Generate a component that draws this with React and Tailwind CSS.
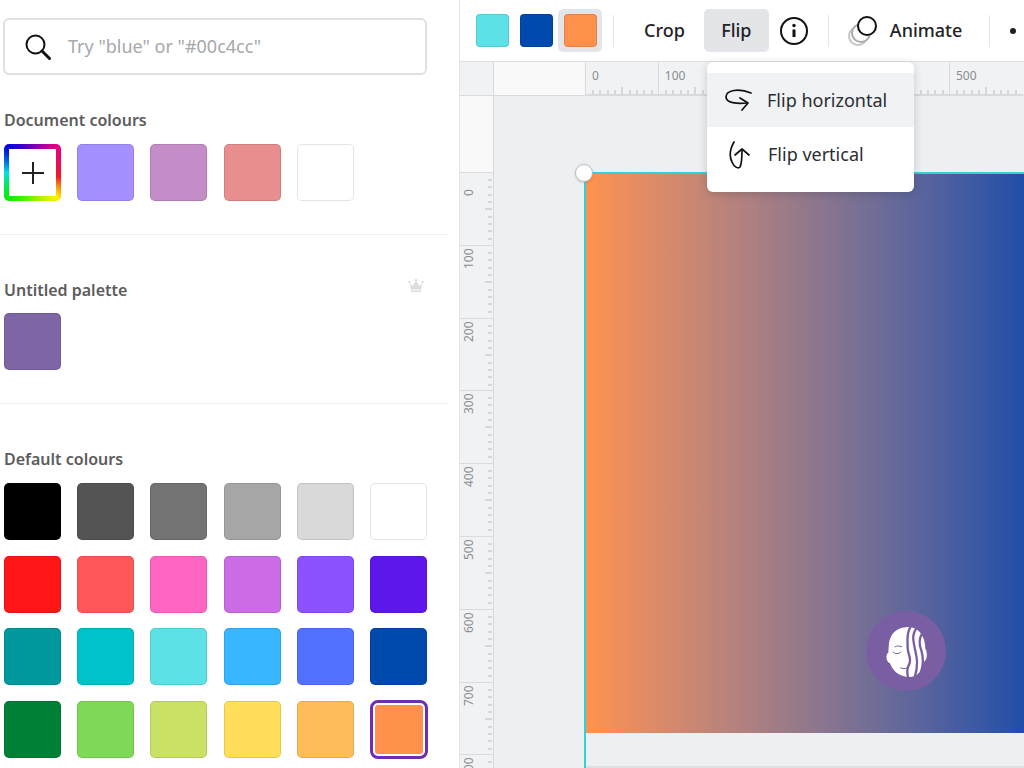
import React from "react";

const documentColours = ["bg-[#a68fff]", "bg-[#c48dc8]", "bg-[#e88e8e]", "bg-white"];

const defaultColours = [
  "bg-[#000000]", "bg-[#545454]", "bg-[#737373]", "bg-[#a6a6a6]", "bg-[#d9d9d9]", "bg-white",
  "bg-[#ff1616]", "bg-[#ff5757]", "bg-[#ff66c4]", "bg-[#cb6ce6]", "bg-[#8c52ff]", "bg-[#5e17eb]",
  "bg-[#03989e]", "bg-[#00c2cb]", "bg-[#5ce1e6]", "bg-[#38b6ff]", "bg-[#5271ff]", "bg-[#004aad]",
  "bg-[#008037]", "bg-[#7ed957]", "bg-[#c9e265]", "bg-[#ffde59]", "bg-[#ffbd59]",
];

const Swatch = ({ color }) => (
  <div className={`w-[57px] h-[57px] rounded-[5px] border border-black/10 ${color}`}></div>
);

const SwatchGrid = ({ children, className = "" }) => (
  <div className={`grid grid-cols-[repeat(6,57px)] gap-x-[16.2px] gap-y-[15.7px] ${className}`}>
    {children}
  </div>
);

const SectionLabel = ({ children }) => (
  <div className="text-[16px] leading-[22px] font-semibold text-[#5c5c5c]">{children}</div>
);

const HorizontalTicks = () => (
  <svg width="73" height="8" viewBox="0 0 73 8" className="block">
    {[7, 14, 22, 29, 36, 44, 51, 58, 66].map((x) => (
      <line key={x} x1={x} x2={x} y1={x === 36 ? 0 : 3} y2="7" stroke="#b9bcc0" strokeWidth="1" />
    ))}
    <line x1="0" x2="73" y1="7.5" y2="7.5" stroke="#d8dadd" strokeWidth="1" />
  </svg>
);

const VerticalTicks = () => (
  <svg width="8" height="73" viewBox="0 0 8 73" className="block">
    {[7, 14, 22, 29, 36, 44, 51, 58, 66].map((y) => (
      <line key={y} y1={y} y2={y} x1={y === 36 ? 0 : 3} x2="7" stroke="#b9bcc0" strokeWidth="1" />
    ))}
  </svg>
);

const HorizontalSegment = ({ label }) => (
  <div className="w-[72.8px] shrink-0 h-full border-l border-[#d8dadd] flex flex-col justify-between">
    <div className="pl-[6px] pt-[5px] text-[12px] leading-[18px] text-[#8a8d91]">{label}</div>
    <HorizontalTicks />
  </div>
);

const VerticalSegment = ({ label }) => (
  <div className="h-[72.8px] shrink-0 w-full border-t border-[#d8dadd] flex justify-between">
    <div className="pl-[4px] pt-[5px] text-[12px] leading-[18px] text-[#8a8d91] [writing-mode:vertical-rl] rotate-180 h-[28px] flex items-center justify-start">
      {label}
    </div>
    <VerticalTicks />
  </div>
);

const ToolbarDivider = () => <div className="w-px h-[32px] bg-[#e4e5e7]"></div>;

const FaceBadge = () => (
  <svg width="80" height="80" viewBox="80 62 240 240" className="block">
    <circle cx="200" cy="182" r="120" fill="#7a5ea3" />
    <path
      d="M205 110 C170 110 148 135 148 170 L147 187 C138 190 140 215 152 219 C160 242 180 260 210 260 C235 260 250 240 252 215 C265 210 265 185 258 175 C258 140 240 110 205 110 Z"
      fill="#fff"
    />
    <g fill="none" stroke="#7a5ea3" strokeWidth="7">
      <path d="M214 108 C200 130 205 150 205 172 C205 195 220 205 208 225 C200 240 205 250 206 264" />
      <path d="M232 112 C216 135 222 150 226 172 C230 195 240 215 226 262" />
      <path d="M248 130 C236 150 240 165 246 180 C252 200 254 220 244 248" />
    </g>
    <g fill="none" stroke="#7a5ea3" strokeWidth="3">
      <path d="M160 184 C168 192 178 192 186 184" />
      <path d="M166 170 C172 166 180 166 188 170" />
      <path d="M183 232 C190 236 198 236 204 232" />
    </g>
  </svg>
);

const App = () => {
  return (
    <div className="w-[1024px] h-[768px] overflow-hidden flex bg-white font-['Noto_Sans','Open_Sans',sans-serif]">
      {/* Colour panel */}
      <div className="w-[460px] shrink-0 h-full pt-[18px] border-r border-[#e4e5e7]">
        <div className="ml-[3px] w-[424px] h-[57px] border-2 border-[#dfe0e2] rounded-[6px] flex items-center pl-[18px] gap-[17px]">
          <svg width="28" height="28" viewBox="0 0 28 28" fill="none" stroke="#111" className="shrink-0">
            <circle cx="12.5" cy="11.5" r="9" strokeWidth="2" />
            <path d="M19 18 L26.5 25.5" strokeWidth="3" strokeLinecap="round" />
          </svg>
          <span className="text-[18px] text-[#a6a8ab]">Try "blue" or "#00c4cc"</span>
        </div>

        <div className="pl-[4px] pt-[34px]">
          <SectionLabel>Document colours</SectionLabel>
          <SwatchGrid className="mt-[13px]">
            <div className="w-[57px] h-[57px] rounded-[5px] p-[5px] bg-[conic-gradient(from_45deg,#e6007e_0deg,#ee1c25_55deg,#fff200_90deg,#00f000_180deg,#00e0e0_225deg,#0000e0_270deg,#e6007e_360deg)]">
              <div className="w-full h-full bg-white flex items-center justify-center">
                <svg width="22" height="22" viewBox="0 0 22 22" stroke="#222" strokeWidth="2">
                  <path d="M11 0 V22 M0 11 H22" />
                </svg>
              </div>
            </div>
            {documentColours.map((c) => (
              <Swatch key={c} color={c} />
            ))}
          </SwatchGrid>
        </div>

        <div className="mt-[33px] h-px w-[448px] bg-[#eeeff0]"></div>

        <div className="pl-[4px] pt-[44px]">
          <div className="flex items-center justify-between w-[420px]">
            <SectionLabel>Untitled palette</SectionLabel>
            <svg width="16" height="14" viewBox="0 0 16 14" fill="#dcdcdc" className="mb-[8px]">
              <path d="M1.5 4 L4.5 7 L8 2 L11.5 7 L14.5 4 L13 10.5 H3 Z" />
              <rect x="3" y="11.5" width="10" height="1.5" />
              <circle cx="1.5" cy="3" r="1.2" />
              <circle cx="8" cy="1.2" r="1.2" />
              <circle cx="14.5" cy="3" r="1.2" />
            </svg>
          </div>
          <SwatchGrid className="mt-[12px]">
            <Swatch color="bg-[#7e66a4]" />
          </SwatchGrid>
        </div>

        <div className="mt-[33px] h-px w-[448px] bg-[#eeeff0]"></div>

        <div className="pl-[4px] pt-[44px]">
          <SectionLabel>Default colours</SectionLabel>
          <SwatchGrid className="mt-[13px]">
            {defaultColours.map((c) => (
              <Swatch key={c} color={c} />
            ))}
            <div className="w-[58px] h-[59px] -mt-px rounded-[8px] border-[3px] border-[#6c2eb5] p-[2px]">
              <div className="w-full h-full rounded-[3px] bg-[#ff914d]"></div>
            </div>
          </SwatchGrid>
        </div>
      </div>

      {/* Editor */}
      <div className="flex-1 min-w-0 h-full flex flex-col relative">
        <div className="h-[62px] shrink-0 border-b border-[#dfe0e2] flex items-center pl-[16px] whitespace-nowrap">
          <div className="w-[33px] h-[33px] rounded-[4px] bg-[#5ce1e6] border border-black/10"></div>
          <div className="w-[33px] h-[33px] rounded-[4px] bg-[#004aad] ml-[11px] border border-black/10"></div>
          <div className="w-[44px] h-[43px] rounded-[5px] bg-[#e3e5e8] ml-[5px] flex items-center justify-center">
            <div className="w-[33px] h-[33px] rounded-[4px] bg-[#ff914d] border border-black/10"></div>
          </div>
          <div className="ml-[11px]"><ToolbarDivider /></div>
          <span className="ml-[30px] text-[18px] font-medium text-[#1f2226]">Crop</span>
          <div className="ml-[19px] w-[65px] h-[43px] rounded-[5px] bg-[#e3e5e8] flex items-center justify-center text-[18px] font-medium text-[#1f2226]">
            Flip
          </div>
          <svg width="30" height="30" viewBox="0 0 30 30" className="ml-[10px] shrink-0" fill="none" stroke="#111">
            <circle cx="15" cy="15" r="13" strokeWidth="2" />
            <path d="M15 13.5 V21" strokeWidth="3" />
            <circle cx="15" cy="9.5" r="1.7" fill="#111" stroke="none" />
          </svg>
          <div className="ml-[19px]"><ToolbarDivider /></div>
          <svg width="30" height="32" viewBox="0 0 30 32" className="ml-[19px] shrink-0" fill="none">
            <circle cx="10" cy="21" r="9" stroke="#c4c5c7" strokeWidth="2" />
            <circle cx="13" cy="18" r="9" stroke="#a9abad" strokeWidth="2" fill="#fff" />
            <circle cx="19" cy="11" r="9" stroke="#111" strokeWidth="2" fill="#fff" />
          </svg>
          <span className="ml-[12px] text-[18px] font-medium text-[#1f2226]">Animate</span>
          <div className="ml-[27px]"><ToolbarDivider /></div>
          <div className="ml-[20px] w-[6px] h-[6px] rounded-full bg-[#1f2226] shrink-0"></div>
        </div>

        {/* Horizontal ruler */}
        <div className="h-[34px] shrink-0 flex border-b border-[#d8dadd] bg-[#f1f2f4]">
          <div className="w-[34px] shrink-0 border-r border-[#d8dadd]"></div>
          <div className="w-[91px] shrink-0 bg-[#f9f9fa]"></div>
          {["0", "100", "200", "300", "400", "500"].map((n) => (
            <HorizontalSegment key={n} label={n} />
          ))}
        </div>

        <div className="flex-1 min-h-0 flex">
          {/* Vertical ruler */}
          <div className="w-[34px] shrink-0 h-full overflow-hidden border-r border-[#d8dadd] bg-[#f1f2f4] flex flex-col">
            <div className="h-[76px] shrink-0 bg-[#f9f9fa]"></div>
            {["0", "100", "200", "300", "400", "500", "600", "700", "800"].map((n) => (
              <VerticalSegment key={n} label={n} />
            ))}
          </div>

          {/* Canvas */}
          <div className="flex-1 min-w-0 h-full bg-[#edeff2] pt-[76px] pl-[90px] overflow-hidden">
            <div className="h-full border-l-[2px] border-[#2ed3d8]">
              <div className="h-[561px] border-t-[2px] border-[#2ed3d8] bg-gradient-to-r from-[#ff914d] to-[#1f4da8]"></div>
              <div className="mt-[33px] h-[3px] bg-[#dcdee1]"></div>
            </div>
          </div>
        </div>

        {/* Selection handle */}
        <div className="absolute left-[115px] top-[164px] w-[18px] h-[18px] rounded-full bg-white border border-[#b9bcc0] shadow-sm"></div>

        {/* Watermark */}
        <div className="absolute left-[406px] top-[611px]">
          <FaceBadge />
        </div>

        {/* Flip menu */}
        <div className="absolute left-[247px] top-[62px] w-[207px] h-[130px] bg-white rounded-[6px] shadow-[0_2px_8px_rgba(30,40,60,0.2)] py-[11px]">
          <div className="h-[54px] bg-[#f1f2f4] flex items-center pl-[18px] gap-[15px]">
            <svg width="27" height="24" viewBox="0 0 27 24" fill="none" stroke="#111" strokeWidth="1.7" strokeLinecap="round" strokeLinejoin="round" className="shrink-0">
              <path d="M26 5 C14 0 1 2 1 9 C1 15 12 16 22 15" />
              <path d="M15 10 L23 15 L17 22" />
            </svg>
            <span className="text-[18px] text-[#2a2d31]">Flip horizontal</span>
          </div>
          <div className="h-[55px] flex items-center pl-[22px] gap-[17px]">
            <svg width="22" height="28" viewBox="0 0 22 28" fill="none" stroke="#111" strokeWidth="1.7" strokeLinecap="round" strokeLinejoin="round" className="shrink-0">
              <path d="M5 1 C1 8 0 15 3 21 C5 26 9 28 11 26 C13 22 13 14 13 9" />
              <path d="M6 14 L13 8 L20 14" />
            </svg>
            <span className="text-[18px] text-[#2a2d31]">Flip vertical</span>
          </div>
        </div>
      </div>
    </div>
  );
};

export default App;
